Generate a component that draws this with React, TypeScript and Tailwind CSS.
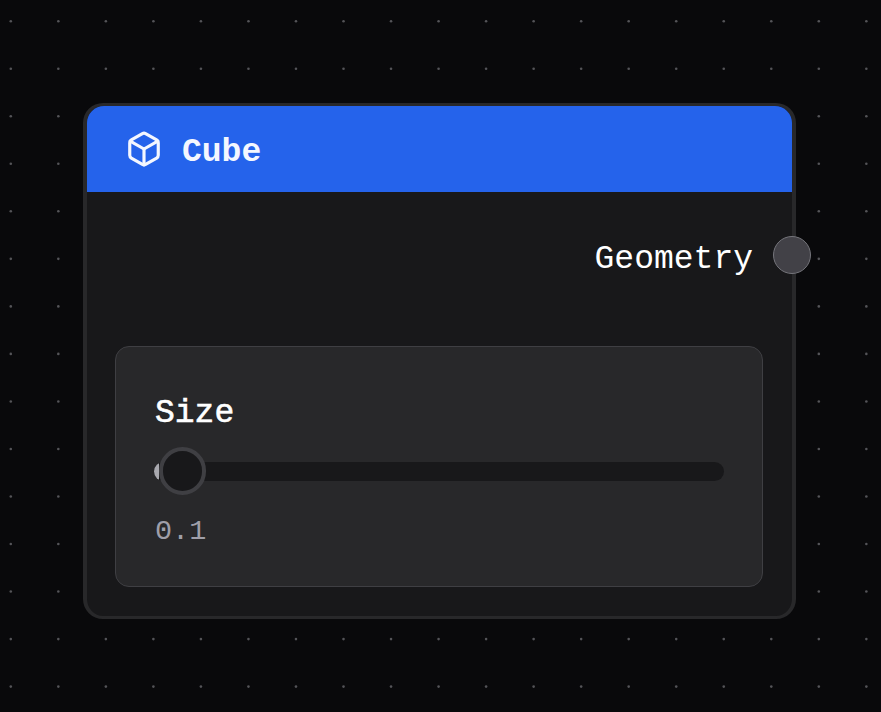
import React from 'react';

const STEP = 47.53;
const DOTS = Array.from({ length: 15 }, (_, row) =>
  Array.from({ length: 19 }, (_, col) => ({ x: 10.8 + col * STEP, y: 21.2 + row * STEP })),
).flat();

function DotGrid() {
  return (
    <svg className="absolute inset-0" width="881" height="712" fill="#545458">
      {DOTS.map((d, i) => (
        <circle key={i} cx={d.x} cy={d.y} r="1.3" />
      ))}
    </svg>
  );
}

function CubeIcon() {
  return (
    <svg
      className="h-[38px] w-[38px] shrink-0"
      viewBox="0 0 24 24"
      fill="none"
      stroke="#f4f7ff"
      strokeWidth="2"
      strokeLinecap="round"
      strokeLinejoin="round"
    >
      <path d="M21 8a2 2 0 0 0-1-1.73l-7-4a2 2 0 0 0-2 0l-7 4A2 2 0 0 0 3 8v8a2 2 0 0 0 1 1.73l7 4a2 2 0 0 0 2 0l7-4A2 2 0 0 0 21 16Z" />
      <path d="m3.3 7 8.7 5 8.7-5" />
      <path d="M12 22V12" />
    </svg>
  );
}

function SizeSlider({ value }: { value: number }) {
  return (
    <div className="mr-[29px] ml-7 mt-[56px] h-[241px] rounded-[14px] border border-[#3f3f43] bg-[#28282a] pr-[37px] pl-[38px] pt-[47px]">
      <div className="h-[37px] pl-px text-[33px] leading-[40px] font-normal text-white [-webkit-text-stroke:0.6px_white]">Size</div>
      <div className="mt-[16px] flex h-[48px] items-center">
        <div className="relative h-[19px] w-[570px]">
          <div className="h-full w-full overflow-hidden rounded-full bg-[#18181a]">
            <div className="h-full w-[5px] bg-[#a8a8ae]" />
          </div>
          <div className="absolute top-[-15px] left-[5px] h-[48px] w-[47px] rounded-full border-4 border-[#3f3f43] bg-[#18181a]" />
        </div>
      </div>
      <div className="mt-[19px] pl-px text-[28.5px] leading-[36px] text-[#9f9fa9]">{value}</div>
    </div>
  );
}

export default function App() {
  return (
    <main className="relative h-[712px] w-[881px] overflow-hidden bg-[#09090b] pt-[103px] pl-[83px] font-['Liberation_Mono',monospace]">
      <DotGrid />
      <section className="relative h-[516px] w-[713px] rounded-[20px] border-x-4 border-y-[3px] border-[#28282a] bg-[#18181a]">
        <header className="flex h-[86px] items-center gap-[19px] rounded-t-[17px] bg-[#2563eb] pl-[38px]">
          <CubeIcon />
          <h1 className="pt-[7px] text-[33px] leading-[40px] font-bold text-[#f4f7ff]">Cube</h1>
        </header>
        <div className="relative flex h-[98px] items-center justify-end pt-[38px] pr-[39px]">
          <span className="text-[33px] leading-[40px] text-white">Geometry</span>
          <span className="absolute top-[44px] right-[-19px] h-[38px] w-[38px] rounded-full border border-[#75757b] bg-[#424147]" />
        </div>
        <SizeSlider value={0.1} />
      </section>
    </main>
  );
}
